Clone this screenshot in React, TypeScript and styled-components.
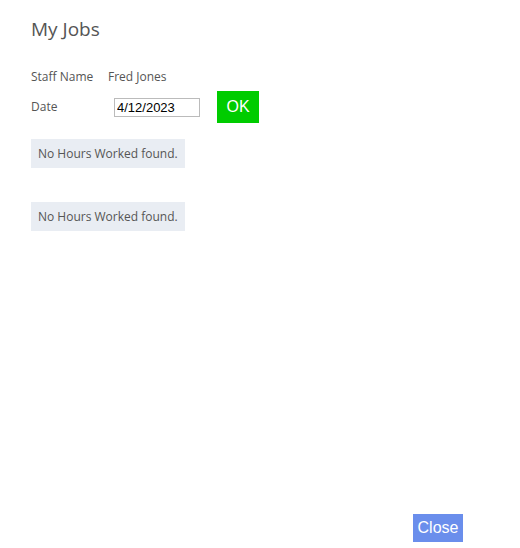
import React from "react";
import styled, { createGlobalStyle } from "styled-components";

const Global = createGlobalStyle`
  html, body { margin: 0; padding: 0; background: #fff; }
  body { font-family: "Open Sans", "Noto Sans", Arial, sans-serif; }
`;

const Page = styled.div`
  box-sizing: border-box;
  height: 548px;
  display: flex;
  flex-direction: column;
  padding: 16px 57px 6px 31px;
  color: #555;
`;

const Title = styled.h1`
  margin: 0 0 27px 0;
  font-weight: 400;
  font-size: 19px;
  line-height: 26px;
  color: #555;
`;

const FormGrid = styled.div`
  display: grid;
  grid-template-columns: 77px auto;
  font-size: 12px;
  align-items: center;
`;

const Label = styled.div<{ $gapBelow?: number }>`
  font-size: 12px;
  line-height: 16px;
  color: #555;
  margin-bottom: ${(p) => p.$gapBelow ?? 0}px;
`;

const DateRow = styled.div`
  display: flex;
  align-items: center;
  gap: 17px;
  padding-left: 6px;
`;

const DateInput = styled.input`
  box-sizing: border-box;
  width: 86px;
  height: 19px;
  border: 1px solid #bbb;
  padding: 0 2px;
  font-family: "Liberation Sans", Arial, sans-serif;
  font-size: 13px;
  color: #000;
  outline: none;
`;

const OkButton = styled.button`
  width: 42px;
  height: 32px;
  border: none;
  background: #00cc00;
  color: #fff;
  font-family: "Liberation Sans", Arial, sans-serif;
  font-size: 16px;
  padding: 0;
  cursor: pointer;
`;

const Notice = styled.div<{ $gap: number }>`
  align-self: flex-start;
  margin-top: ${(p) => p.$gap}px;
  background: #e9edf3;
  padding: 0 7px;
  height: 29px;
  display: flex;
  align-items: center;
  font-size: 12px;
  color: #555;
`;

const Footer = styled.div`
  margin-top: auto;
  display: flex;
  justify-content: flex-end;
`;

const CloseButton = styled.button`
  width: 50px;
  height: 28px;
  border: none;
  padding: 0;
  background: #6a8eec;
  color: #fff;
  font-family: "Liberation Sans", Arial, sans-serif;
  font-size: 16px;
  cursor: pointer;
`;

export default function App() {
  return (
    <>
      <Global />
      <Page>
        <Title>My Jobs</Title>
        <FormGrid>
          <Label $gapBelow={6}>Staff Name</Label>
          <Label $gapBelow={6}>Fred Jones</Label>
          <Label>Date</Label>
          <DateRow>
            <DateInput defaultValue="4/12/2023" />
            <OkButton>OK</OkButton>
          </DateRow>
        </FormGrid>
        <Notice $gap={16}>No Hours Worked found.</Notice>
        <Notice $gap={34}>No Hours Worked found.</Notice>
        <Footer>
          <CloseButton>Close</CloseButton>
        </Footer>
      </Page>
    </>
  );
}
